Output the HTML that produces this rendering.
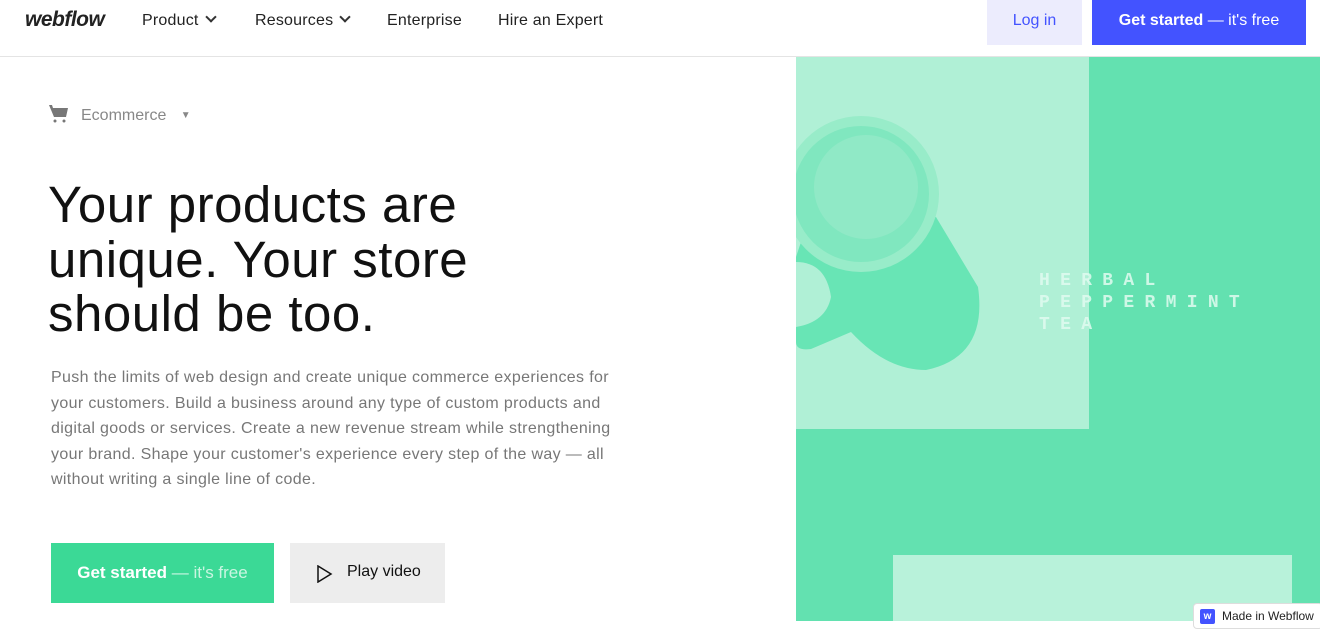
<!DOCTYPE html>
<html><head><meta charset="utf-8"><style>
*{margin:0;padding:0;box-sizing:border-box}
body{width:1320px;height:621px;overflow:hidden;background:#fff;font-family:"Liberation Sans",sans-serif;position:relative}
.nav{position:absolute;left:0;top:0;width:1320px;height:57px;border-bottom:1px solid #e4e4e4}
.logo{position:absolute;left:25px;top:8px;font-size:21px;font-weight:bold;font-style:italic;color:#222;letter-spacing:-0.5px}
.ni{position:absolute;top:12px;font-size:16px;color:#222;letter-spacing:0.2px}
.chev{display:inline-block;width:8px;height:8px;border-right:2px solid #333;border-bottom:2px solid #333;transform:rotate(45deg);margin-left:8px;position:relative;top:-4px}
.login{position:absolute;left:987px;top:0;width:95px;height:45px;background:#ececfd;color:#4353ff;font-size:16px;text-align:center;line-height:42px}
.gs{position:absolute;left:1092px;top:0;width:214px;height:45px;background:#4353ff;color:#fff;font-size:16px;font-weight:bold;text-align:center;line-height:42px}
.cat{position:absolute;left:49px;top:104px;font-size:16px;color:#888}
h1{position:absolute;left:48px;top:178px;font-size:51px;line-height:54.5px;font-weight:normal;color:#111;letter-spacing:0.5px}
p{position:absolute;left:51px;top:365px;width:585px;font-size:16px;line-height:25.5px;color:#777;letter-spacing:0.35px}
.b1{position:absolute;left:51px;top:543px;width:223px;height:60px;background:#3bd996;color:#fff;font-size:17px;line-height:60px;text-align:center}
.b2{position:absolute;left:290px;top:543px;width:155px;height:60px;background:#ededed;color:#111;font-size:16px;line-height:58px}
.panel{position:absolute;left:796px;top:57px;width:524px;height:564px;background:#63e1b0;overflow:hidden}
.tea{position:absolute;left:243px;top:213px;font-family:"Liberation Mono",monospace;font-weight:bold;font-size:18px;line-height:22px;letter-spacing:10.3px;color:rgba(225,250,240,.85)}
.badge{position:absolute;left:1193px;top:603px;width:130px;height:26px;background:#fff;border:1px solid #ddd;border-radius:4px;font-size:12px;color:#222}
</style></head><body>
<div class="nav">
<div class="logo">webflow</div>
<div class="ni" style="left:142px">Product<span class="chev"></span></div>
<div class="ni" style="left:255px">Resources<span class="chev"></span></div>
<div class="ni" style="left:387px">Enterprise</div>
<div class="ni" style="left:498px">Hire an Expert</div>
<div class="login">Log in</div>
<div class="gs">Get started <span style="font-weight:normal">— it's free</span></div>
</div>
<div class="cat"><svg width="20" height="20" viewBox="0 0 20 20" style="vertical-align:-4px;margin-right:12px"><path d="M0 1h3l1 3h15l-2 9H5z" fill="#777"/><circle cx="6" cy="17" r="1.5" fill="#777"/><circle cx="15" cy="17" r="1.5" fill="#777"/></svg>Ecommerce <span style="font-size:10px;margin-left:10px;position:relative;top:-2px">▼</span></div>
<h1>Your products are<br>unique. Your store<br>should be too.</h1>
<p>Push the limits of web design and create unique commerce experiences for your customers. Build a business around any type of custom products and digital goods or services. Create a new revenue stream while strengthening your brand. Shape your customer's experience every step of the way — all without writing a single line of code.</p>
<div class="b1"><b>Get started</b> <span style="color:#c9f5e1">— it's free</span></div>
<div class="b2"><svg width="16" height="18" viewBox="0 0 16 18" style="position:absolute;left:27px;top:22px"><path d="M1 1L14 9L1 17Z" fill="none" stroke="#111" stroke-width="1.5"/></svg><span style="position:absolute;left:57px">Play video</span></div>
<div class="panel">
<div style="position:absolute;left:0;top:0;width:293px;height:372px;background:#b0f0d6"></div>
<svg style="position:absolute;left:0;top:0" width="293" height="372"><path d="M10 170 L140 160 L182 230 Q192 300 130 313 Q90 313 55 275 L15 292 Q0 294 0 285 L0 200 Z" fill="#68e5b5"/><path d="M0 205 Q30 205 35 240 Q30 265 0 270 Z" fill="#b0f0d6"/><circle cx="65" cy="137" r="78" fill="#98ecc9"/><circle cx="65" cy="137" r="68" fill="#80e7bf"/><circle cx="70" cy="130" r="52" fill="#90e9c6"/></svg>
<div class="tea">HERBAL<br>PEPPERMINT<br>TEA</div>
<div style="position:absolute;left:97px;top:498px;width:399px;height:70px;background:#b8f2da"></div>
</div>
<div class="badge"><span style="position:absolute;left:6px;top:5px;width:15px;height:15px;background:#4353ff;border-radius:2px;color:#fff;font-size:10px;font-weight:bold;text-align:center;line-height:15px">w</span><span style="position:absolute;left:28px;top:5px">Made in Webflow</span></div>
</body></html>
